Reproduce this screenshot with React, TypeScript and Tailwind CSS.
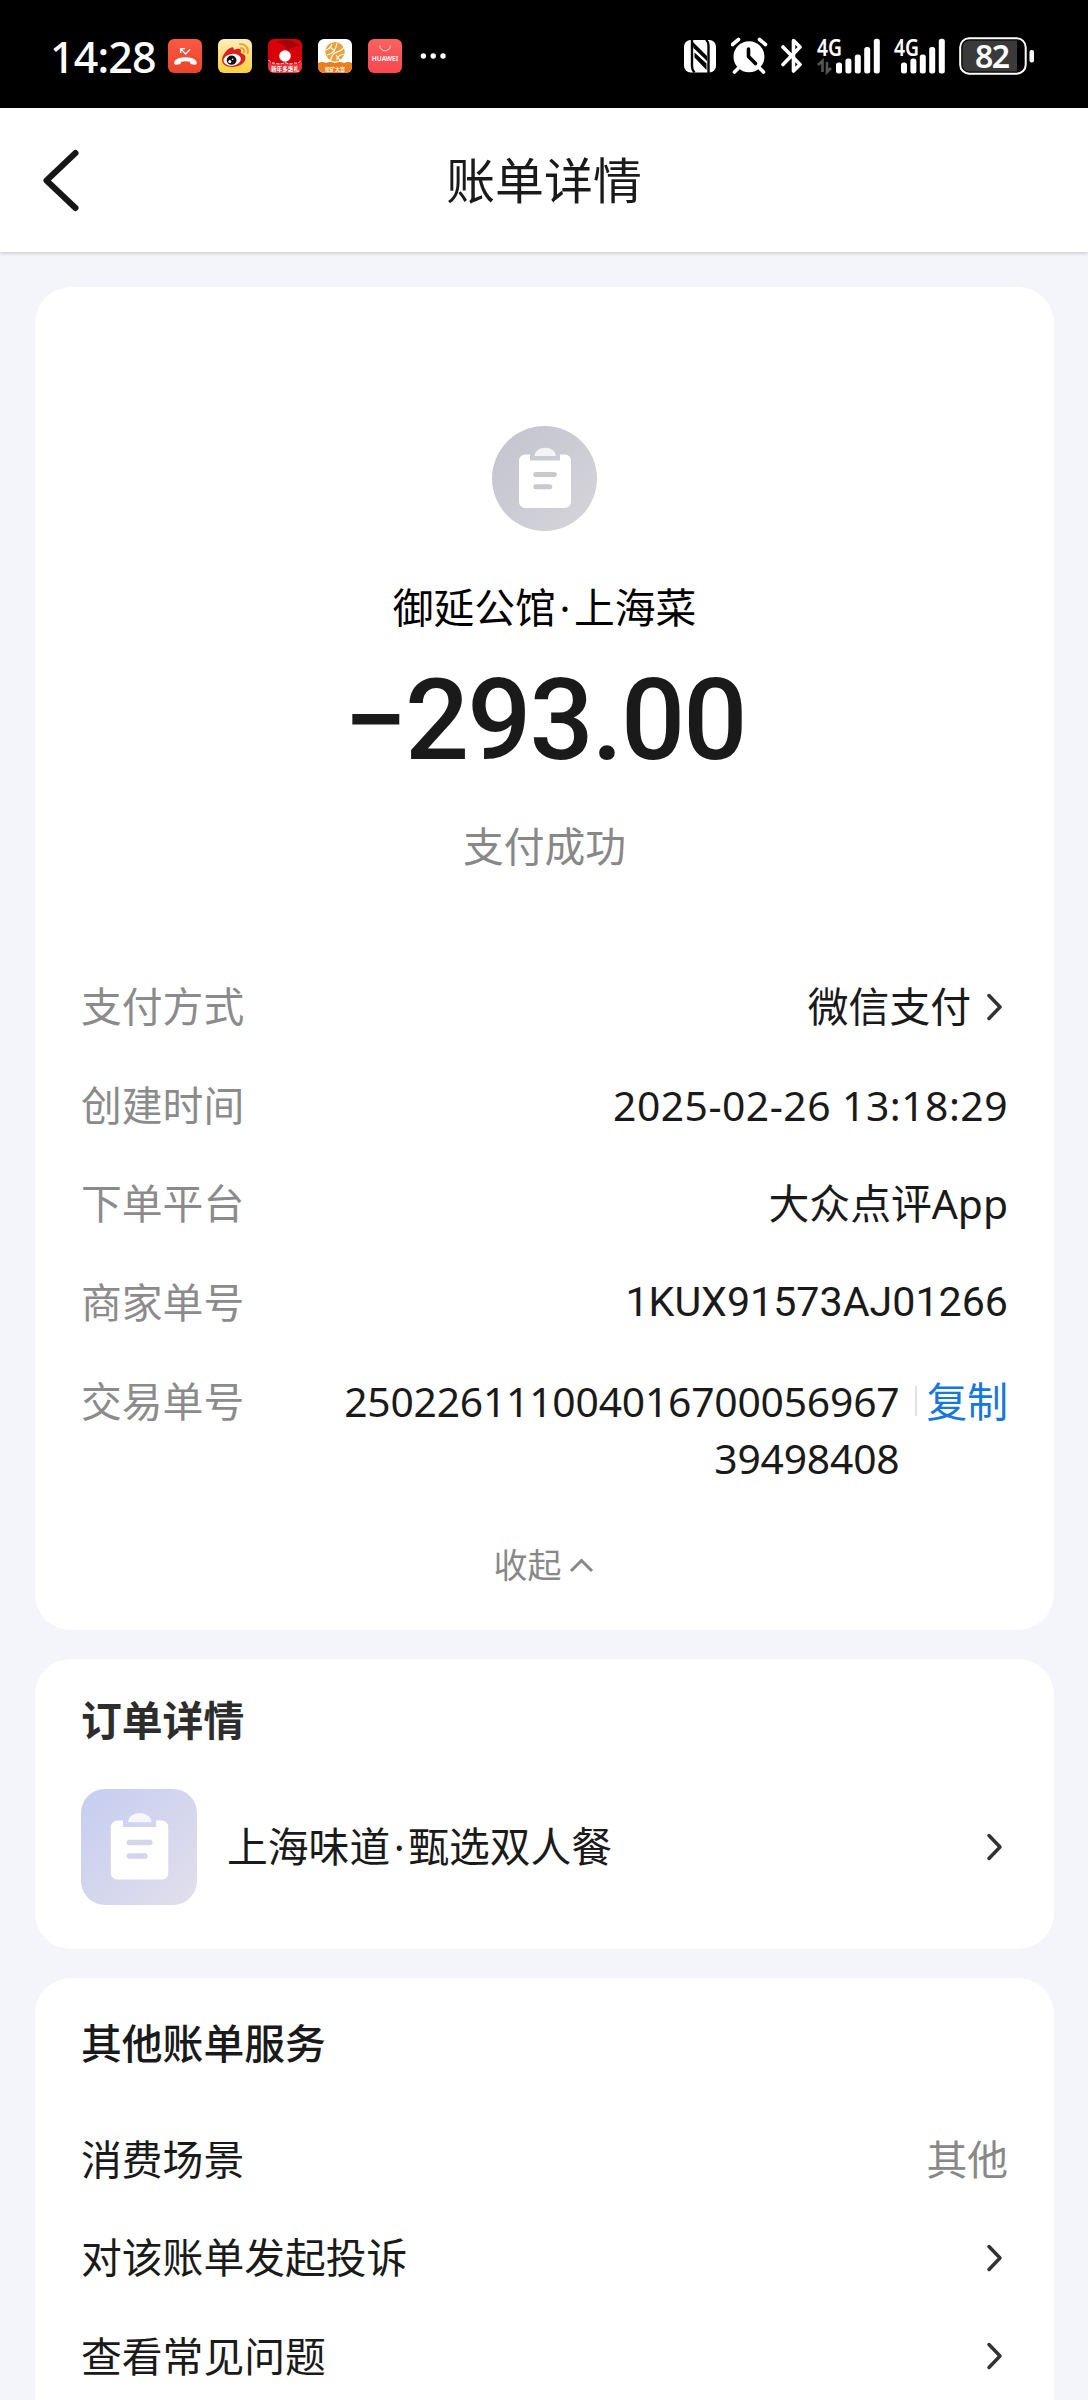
import { ReactNode } from "react";

function StatusBar() {
  return (
    <div className="h-[108px] bg-black text-white flex items-start">
      <span className="ml-[50px] mt-[29px] w-[118px] text-[43px] leading-[56px] font-medium tracking-[-0.9px] whitespace-nowrap">
        14:28
      </span>

      {/* Notification icons */}
      <div className="mt-[39px] flex gap-4">
        <MissedCallIcon />
        <WeiboIcon />
        <FestivalIcon />
        <GlobeIcon />
        <HuaweiIcon />
      </div>
      <svg className="ml-[18px] mt-[52px]" width="28" height="8" fill="#fff">
        <circle cx="3.4" cy="4" r="2.7" />
        <circle cx="13.2" cy="4" r="2.7" />
        <circle cx="23" cy="4" r="2.7" />
      </svg>

      {/* System icons */}
      <div className="ml-auto mr-[53px] mt-9 flex">
        <NfcIcon />
        <AlarmIcon />
        <BluetoothIcon />
        <Signal dim />
        <Signal />
        <Battery />
      </div>
    </div>
  );
}

function MissedCallIcon() {
  return (
    <svg width="34" height="34" viewBox="0 0 34 34">
      <defs>
        <linearGradient id="call" x1="0" y1="0" x2="0" y2="1">
          <stop offset="0" stopColor="#fc5843" />
          <stop offset="1" stopColor="#e8452a" />
        </linearGradient>
      </defs>
      <rect width="34" height="34" rx="6" fill="url(#call)" />
      <path d="M12.6 14V9.6H17M12.6 9.6l5 5.4 4.4-4.6" fill="none" stroke="#fff" strokeWidth="1.3" />
      <path
        d="M6.2 23.6c0-3.2 5-5.4 11.3-5.4s11.2 2.2 11.2 5.4c0 1.6-.5 2.3-1.7 2.2l-3.4-.5c-1.3-.2-1.5-.8-1.5-2.5-2.7-.9-6.5-.9-9.2 0 0 1.7-.2 2.3-1.500 2.500l-3.400.5c-1.300.1-1.800-.6-1.800-2.200z"
        fill="#fff"
      />
    </svg>
  );
}

function WeiboIcon() {
  return (
    <svg width="34" height="34" viewBox="0 0 34 34">
      <defs>
        <linearGradient id="weibo" x1="0" y1="0" x2="0" y2="1">
          <stop offset="0" stopColor="#fdeebd" />
          <stop offset="1" stopColor="#fdd03a" />
        </linearGradient>
      </defs>
      <rect width="34" height="34" rx="6" fill="url(#weibo)" />
      <path
        d="M4 21c0-4.6 5-11.5 9.5-12.6 2-.4 2.5 1 2.2 2.6 2.5-1.3 6.8-2.3 7.3.6.1 1-.2 1.7-.3 2.3 3 .7 4.8 2.3 4.8 5.1 0 5-6.5 9-13.3 9C8 28 4 25.2 4 21z"
        fill="#dd1f1d"
      />
      <ellipse cx="14.2" cy="20.8" rx="8.7" ry="5.9" fill="#fff" transform="rotate(-8 14.2 20.8)" />
      <ellipse cx="13.6" cy="21.2" rx="4.9" ry="4.6" fill="#111" />
      <circle cx="11.8" cy="22.4" r="1.5" fill="#fff" />
      <circle cx="14.6" cy="20.3" r=".8" fill="#fff" />
      <path
        d="M22 5.2c5-.8 9 3.8 7.600 9M22.600 9.300c2.500-.4 4.200 1.700 3.500 4.100"
        fill="none"
        stroke="#f0a02c"
        strokeWidth="1.9"
        strokeLinecap="round"
      />
    </svg>
  );
}

function FestivalIcon() {
  return (
    <svg width="34" height="34" viewBox="0 0 34 34">
      <rect width="34" height="34" rx="6" fill="#d7000b" />
      <path d="M8 3c9-3 20-2 24 4-5 0-9 2-12 5-2-5-7-8-12-9z" fill="#a80008" />
      <path d="M0 23.5q8 2.5 17 0 9 2.5 17 0V28a6 6 0 0 1-6 6H6a6 6 0 0 1-6-6z" fill="#e5343a" />
      <path
        d="M.5 21q3 4 7 3 4 2 9.500-.5 5.500 2.500 9.500.5 4 1 7-3"
        fill="none"
        stroke="#fff"
        strokeDasharray="3 1.5"
      />
      <circle cx="17" cy="17" r="5.8" fill="#fff" />
      <text x="17" y="31.500" textAnchor="middle" fontSize="5.600" fontWeight="700" fill="#fff">
        新年多惠礼
      </text>
    </svg>
  );
}

function GlobeIcon() {
  return (
    <svg width="34" height="34" viewBox="0 0 34 34">
      <rect width="34" height="34" rx="6" fill="#fff" />
      <circle cx="17" cy="12.700" r="9.700" fill="#e9a13b" />
      <path
        d="M8 11q4-1 6-6M9 16q8-1 10-12M13 21q0-6 6-8t7-5M19 21q-1-4 7-6M12 8l5 4M18 16l4 5"
        fill="none"
        stroke="#fff"
        strokeWidth="1.1"
      />
      <path d="M0 24q4-2 8 0 4-2 9 0 5-2 9 0 4-2 8 0v4a6 6 0 0 1-6 6H6a6 6 0 0 1-6-6z" fill="#ea7f1e" />
      <text x="17" y="31.500" textAnchor="middle" fontSize="5" fontWeight="700" fill="#fff">
        挖矿大富
      </text>
    </svg>
  );
}

function HuaweiIcon() {
  return (
    <svg width="34" height="34" viewBox="0 0 34 34">
      <defs>
        <linearGradient id="huawei" x1="0" y1="0" x2="0" y2="1">
          <stop offset="0" stopColor="#f8635f" />
          <stop offset="1" stopColor="#fb4650" />
        </linearGradient>
      </defs>
      <rect width="34" height="34" rx="6" fill="url(#huawei)" />
      <path d="M11.8 6.5a5.3 5.3 0 0 0 10.6 0" fill="none" stroke="#fff" strokeOpacity=".8" strokeWidth=".9" />
      <text x="17" y="21.900" textAnchor="middle" textLength="26.500" fontSize="6.600" fontWeight="600" fill="#fff">
        HUAWEI
      </text>
    </svg>
  );
}

function NfcIcon() {
  return (
    <svg width="47" height="40" viewBox="0 0 47 40">
      <rect y="4" width="32" height="32.5" rx="6.5" fill="#fff" />
      <path d="M8 3.500v27q0 3.500 2.500 6" fill="none" stroke="#000" strokeWidth="2.400" />
      <path d="M22 3.500q2.500 2.500 2.500 6V37" fill="none" stroke="#000" strokeWidth="2.400" />
      <path d="M8 5l15 15v5L9.500 12zM10.500 16.500L22.500 27.500v6.500L10.500 21.500z" fill="#000" />
    </svg>
  );
}

function AlarmIcon() {
  return (
    <svg width="50" height="40" viewBox="0 0 50 40">
      <path
        d="M1.5 8.5l6-5M34.5 8.5l-6-5M7 32.5l-3.5 3.5M29 32.5l3.5 3.5"
        stroke="#fff"
        strokeWidth="3.6"
        strokeLinecap="round"
      />
      <circle cx="18" cy="20.8" r="15.5" fill="#fff" />
      <path d="M17.500 13v7.500l7 7" fill="none" stroke="#000" strokeWidth="3.600" strokeLinecap="round" strokeLinejoin="round" />
    </svg>
  );
}

function BluetoothIcon() {
  return (
    <svg width="36" height="40" viewBox="0 0 36 40" fill="none" stroke="#fff" strokeWidth="3.6" strokeLinecap="round" strokeLinejoin="round">
      <path d="M2 11l17 17.500-6.500 6.500V4.500L19 11 2 28.500" />
    </svg>
  );
}

function Signal({ dim = false }: { dim?: boolean }) {
  return (
    <svg
      className="overflow-visible"
      width={dim ? 77 : 65}
      height="40"
      viewBox={dim ? "0 0 77 40" : "12 0 65 40"}
      fill="#fff"
    >
      <text x={dim ? 0 : 12} y="19.500" textLength="25" lengthAdjust="spacingAndGlyphs" fontSize="23" fontWeight="600">
        4G
      </text>
      {dim && <path d="M1 29l4.500-4V36M10 26v10l4-4" fill="none" stroke="#555" strokeWidth="2.600" />}
      <rect x="19" y="26.5" width="6" height="11" rx="2.5" />
      <rect x="28.4" y="22.5" width="6" height="15" rx="2.5" />
      <rect x="37.8" y="18.5" width="6" height="19" rx="2.5" />
      <rect x="47.2" y="11" width="6" height="26.5" rx="2.5" />
      <rect x="56.8" y="2.7" width="6" height="34.8" rx="2.5" />
    </svg>
  );
}

function Battery() {
  return (
    <svg className="overflow-visible" width="76" height="40" viewBox="0 0 76 40">
      <rect x="1.2" y="2.2" width="65.5" height="35.5" rx="9" fill="none" stroke="#fff" strokeWidth="2" />
      <path d="M10 4.500H58v31H10a6.500 6.500 0 0 1-6.500-6.500V11A6.500 6.500 0 0 1 10 4.500z" fill="#3a3a3a" />
      <rect x="70.5" y="14" width="4.5" height="12.5" rx="2" fill="#fff" />
      <text x="33.5" y="31.5" textAnchor="middle" fontSize="32" textLength="35" fontWeight="600" fill="#fff">
        82
      </text>
    </svg>
  );
}

function ClipboardIcon({ size, line }: { size: number; line: string }) {
  return (
    <svg width={size} height={size} viewBox="0 0 105 105" fill="none">
      <path
        d="M33 28.500h5V34.500h30v-6h5a6 6 0 0 1 6 6v41.500a6 6 0 0 1-6 6H33a6 6 0 0 1-6-6V34.500a6 6 0 0 1 6-6z"
        fill="#fff"
      />
      <path d="M42.500 30c.5-5 5-8.200 10.700-8.200s10.200 3.200 10.700 8.200z" fill="#fff" fillOpacity=".8" />
      <path d="M43.800 48.500h18.500M43.800 60.700h14" stroke={line} strokeWidth="5" strokeLinecap="round" />
    </svg>
  );
}

function ChevronRight() {
  return (
    <svg
      className="shrink-0"
      width="22"
      height="32"
      viewBox="0 0 22 32"
      fill="none"
      stroke="#333"
      strokeWidth="3.5"
      strokeLinecap="round"
      strokeLinejoin="round"
    >
      <path d="M3 4.500L14 16 3 27.500" />
    </svg>
  );
}

function Dot() {
  return <span className="inline-block w-[18px] text-center">·</span>;
}

function DetailRow({ label, children }: { label: string; children: ReactNode }) {
  return (
    <div className="flex justify-between leading-[57.5px] mb-[41.2px]">
      <span className="text-[#8b8b8b]">{label}</span>
      <div className="flex items-center text-right">{children}</div>
    </div>
  );
}

function ServiceRow({ label, value }: { label: string; value?: string }) {
  return (
    <div className="flex items-center justify-between h-[98.6px]">
      <span>{label}</span>
      {value ? <span className="text-[#888]">{value}</span> : <ChevronRight />}
    </div>
  );
}

export default function App() {
  return (
    <div className="w-[1088px] h-[2400px] overflow-hidden bg-[#f4f5fa] text-[#1a1a1a] text-[40.8px] font-['Noto_Sans','Noto_Sans_CJK_SC',sans-serif]">
      <StatusBar />

      <header className="relative h-36 bg-white flex items-center justify-center shadow-[0_2px_3px_rgba(0,0,0,0.14)]">
        <svg
          className="absolute left-10 top-9"
          width="44"
          height="72"
          viewBox="0 0 44 72"
          fill="none"
          stroke="#161616"
          strokeWidth="6"
          strokeLinecap="round"
          strokeLinejoin="round"
        >
          <path d="M35.500 9L6.500 36.500l29 27.500" />
        </svg>
        <h1 className="text-[48.9px] leading-[60px]">账单详情</h1>
      </header>

      <main className="px-[35px] pt-[35px] flex flex-col gap-[29px]">
        {/* Payment summary */}
        <section className="h-[1343px] w-[1019px] bg-white rounded-[36px] pt-[139px] px-[46px] flex flex-col">
          <div className="self-center size-[105px] rounded-full bg-linear-to-br from-[#c2c3d0] to-[#d6d5d9]">
            <ClipboardIcon size={105} line="#c9c8d0" />
          </div>
          <p className="mt-[48px] text-center leading-[57px] text-black">
            御延公馆
            <Dot />
            上海菜
          </p>
          <p className="mt-[28px] text-center font-['Roboto'] font-medium text-[113px] leading-[113px] tracking-[-2px]">
            −293.00
          </p>
          <p className="mt-[41px] text-center leading-[57px] text-[#888]">支付成功</p>

          <div className="mt-[103px]">
            <DetailRow label="支付方式">
              <span className="mr-[15px]">微信支付</span>
              <ChevronRight />
            </DetailRow>
            <DetailRow label="创建时间">
              <span className="tracking-[0.5px]">2025-02-26 13:18:29</span>
            </DetailRow>
            <DetailRow label="下单平台">大众点评App</DetailRow>
            <DetailRow label="商家单号">
              <span className="font-['Roboto'] text-[41.2px]">1KUX91573AJ01266</span>
            </DetailRow>
            <div className="flex leading-[57.5px]">
              <span className="text-[#8b8b8b]">交易单号</span>
              <span className="ml-auto w-[560px] text-right tracking-[-0.2px]">
                250226111004016700056967
                <br />
                39498408
              </span>
              <span className="ml-4 mt-[13px] h-[30px] w-0.5 bg-[#e2e2e2]" />
              <span className="ml-[9px] text-[#1677dc]">复制</span>
            </div>
          </div>

          <button className="mt-[52px] flex items-center justify-center text-[34px] leading-[50px] text-[#888]">
            收起
            <svg className="ml-1.5" width="28" height="18" viewBox="0 0 28 18" fill="none" stroke="#888" strokeWidth="3">
              <path d="M3 15L13.500 4.500 24 15" />
            </svg>
          </button>
        </section>

        {/* Order */}
        <section className="h-[290px] w-[1019px] bg-white rounded-[36px] pt-[33px] px-[46px]">
          <h2 className="font-bold leading-[57px] text-[#2d2d2d]">订单详情</h2>
          <div className="mt-10 flex items-center">
            <div className="size-[116px] rounded-[24px] bg-linear-to-br from-[#c5cdf0] to-[#e2dfeb]">
              <ClipboardIcon size={116} line="#d4d5ec" />
            </div>
            <span className="ml-[30px] flex-1">
              上海味道
              <Dot />
              甄选双人餐
            </span>
            <ChevronRight />
          </div>
        </section>

        {/* Other services */}
        <section className="h-[460px] w-[1019px] bg-white rounded-t-[36px] pt-[37px] px-[46px]">
          <h2 className="font-medium leading-[57px]">其他账单服务</h2>
          <div className="mt-[38px]">
            <ServiceRow label="消费场景" value="其他" />
            <ServiceRow label="对该账单发起投诉" />
            <ServiceRow label="查看常见问题" />
          </div>
        </section>
      </main>
    </div>
  );
}
